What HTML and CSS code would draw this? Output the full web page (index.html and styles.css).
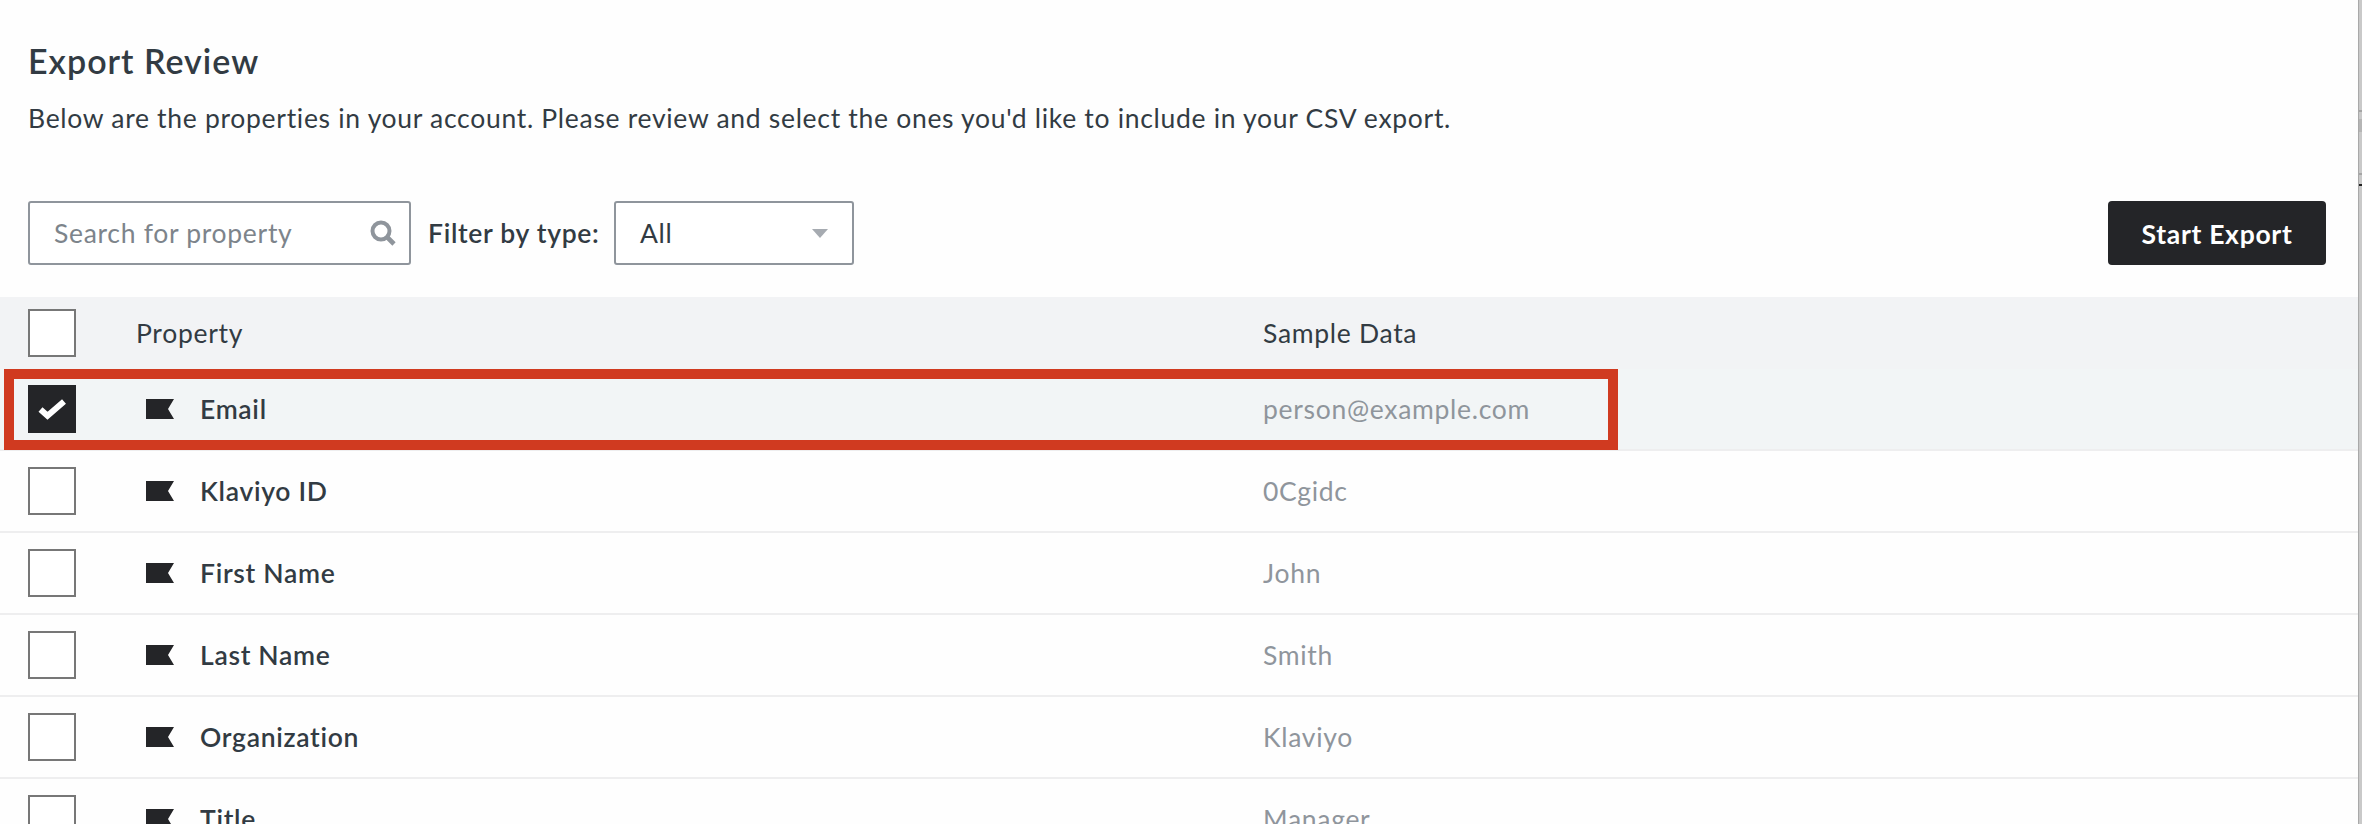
FILE: index.html
```html
<!DOCTYPE html>
<html lang="en">
<head>
    <meta charset="UTF-8">
    <title>Export Review</title>
    <link rel="stylesheet" href="styles.css">
</head>
<body>
    <div class="page">
        <div class="intro">
            <h2>Export Review</h2>
            <p>Below are the properties in your account. Please review and select the ones you'd like to include in your CSV export.</p>
        </div>

        <div class="toolbar">
            <div class="search-box">
                <span>Search for property</span>
                <svg class="search-icon" viewBox="0 0 26 26"><circle cx="11" cy="11" r="8.5" fill="none" stroke="#8f959c" stroke-width="4"/><path d="M17 17l7 7" stroke="#8f959c" stroke-width="4.6"/></svg>
            </div>
            <label class="filter-label">Filter by type:</label>
            <div class="select-box">
                <span>All</span>
                <svg class="select-arrow" viewBox="0 0 16 9"><path d="M0 0h16l-8 9z" fill="#a6abb1"/></svg>
            </div>
            <button class="export-btn">Start Export</button>
        </div>

        <div class="row head-row">
            <div class="check-cell"><span class="check"></span></div>
            <div class="name-cell">Property</div>
            <div class="data-cell">Sample Data</div>
        </div>

        <div class="row prop-row selected">
            <div class="check-cell"><span class="check checked"><svg viewBox="0 0 48 48"><path d="M12.5 24.5l7 6.2L36 16.5" fill="none" stroke="#fff" stroke-width="6"/></svg></span></div>
            <div class="name-cell"><svg class="flag" viewBox="0 0 28 20"><path d="M0 0h28l-6 10 6 10H0z"/></svg><b>Email</b></div>
            <div class="data-cell">person@example.com</div>
            <div class="highlight"></div>
        </div>
        <div class="row prop-row">
            <div class="check-cell"><span class="check"></span></div>
            <div class="name-cell"><svg class="flag" viewBox="0 0 28 20"><path d="M0 0h28l-6 10 6 10H0z"/></svg><b>Klaviyo ID</b></div>
            <div class="data-cell">0Cgidc</div>
        </div>
        <div class="row prop-row">
            <div class="check-cell"><span class="check"></span></div>
            <div class="name-cell"><svg class="flag" viewBox="0 0 28 20"><path d="M0 0h28l-6 10 6 10H0z"/></svg><b>First Name</b></div>
            <div class="data-cell">John</div>
        </div>
        <div class="row prop-row">
            <div class="check-cell"><span class="check"></span></div>
            <div class="name-cell"><svg class="flag" viewBox="0 0 28 20"><path d="M0 0h28l-6 10 6 10H0z"/></svg><b>Last Name</b></div>
            <div class="data-cell">Smith</div>
        </div>
        <div class="row prop-row">
            <div class="check-cell"><span class="check"></span></div>
            <div class="name-cell"><svg class="flag" viewBox="0 0 28 20"><path d="M0 0h28l-6 10 6 10H0z"/></svg><b>Organization</b></div>
            <div class="data-cell">Klaviyo</div>
        </div>
        <div class="row prop-row">
            <div class="check-cell"><span class="check"></span></div>
            <div class="name-cell"><svg class="flag" viewBox="0 0 28 20"><path d="M0 0h28l-6 10 6 10H0z"/></svg><b>Title</b></div>
            <div class="data-cell">Manager</div>
        </div>
    </div>
    <div class="edge"></div>
</body>
</html>
```

FILE: styles.css
```css
body {
    margin: 0;
    height: 824px;
    overflow: hidden;
    display: flex;
    background-color: #fefefe;
    font-family: Lato, "Liberation Sans", sans-serif;
    font-size: 26.5px;
    letter-spacing: 0.7px;
    color: #323b43;
}

.page {
    width: 2358px;
    height: 824px;
    overflow: hidden;
}

/* sliver of the window behind, at the right side */
.edge {
    width: 4px;
    height: 824px;
    border-left: 1px solid #a9a9a9;
    box-sizing: border-box;
    background: linear-gradient(#c9c9c9 110px, #a5a5a5 110px, #a5a5a5 112px, #c9c9c9 112px, #c9c9c9 119px, #b5b5b5 119px, #b5b5b5 132px, #c9c9c9 132px, #c9c9c9 173px, #a5a5a5 173px, #a5a5a5 175px, #c9c9c9 175px, #c9c9c9 184px, #222 184px, #222 186px, #c9c9c9 186px);
}

.intro {
    padding: 40px 28px 0;
    height: 201px;
    box-sizing: border-box;
}

h2 {
    margin: 0;
    font-size: 34px;
    line-height: 41px;
    letter-spacing: 1px;
    font-weight: 600;
}

p {
    margin: 18px 0 0;
    line-height: 38px;
}

.toolbar {
    display: flex;
    align-items: stretch;
    height: 64px;
    padding: 0 32px 0 28px;
    margin-bottom: 32px;
}

.search-box,
.select-box {
    display: flex;
    align-items: center;
    justify-content: space-between;
    box-sizing: border-box;
    border: 2px solid #8f959c;
    border-radius: 3px;
    background-color: #fff;
}

.search-box {
    width: 383px;
    padding: 0 13px 0 24px;
    color: #7d848b;
}

.search-icon {
    width: 26px;
    height: 26px;
}

.filter-label {
    display: flex;
    align-items: center;
    width: 186px;
    margin-left: 17px;
    font-weight: 600;
    white-space: nowrap;
}

.select-box {
    width: 240px;
    padding: 0 24px;
}

.select-arrow {
    width: 16px;
    height: 9px;
}

.export-btn {
    width: 218px;
    margin-left: auto;
    padding: 2px 0 0;
    border: none;
    border-radius: 4px;
    background-color: #242528;
    color: #fff;
    font-family: inherit;
    font-size: 26.5px;
    letter-spacing: 0.7px;
    font-weight: 700;
}

.row {
    position: relative;
    display: flex;
    align-items: center;
    height: 80px;
    border-bottom: 2px solid #eeeeef;
}

.head-row {
    height: 72px;
    border-bottom: none;
    background-color: #f2f3f5;
}

.selected {
    background-color: #f2f5f6;
}

.check-cell {
    width: 136px;
    padding-left: 28px;
    box-sizing: border-box;
}

.check {
    display: block;
    width: 48px;
    height: 48px;
    box-sizing: border-box;
    border: 2px solid #777;
    background-color: #fff;
}

.check.checked {
    border: none;
    background-color: #242528;
}

.check svg {
    display: block;
}

.name-cell {
    display: flex;
    align-items: center;
    width: 1127px;
}

.name-cell b {
    font-weight: 600;
}

.flag {
    width: 28px;
    height: 20px;
    margin: 0 26px 0 10px;
    fill: #242528;
}

.prop-row .data-cell {
    color: #8f959c;
}

.highlight {
    position: absolute;
    left: 4px;
    top: 0;
    width: 1614px;
    height: 81px;
    box-sizing: border-box;
    border: 10px solid #d03a20;
}
```
